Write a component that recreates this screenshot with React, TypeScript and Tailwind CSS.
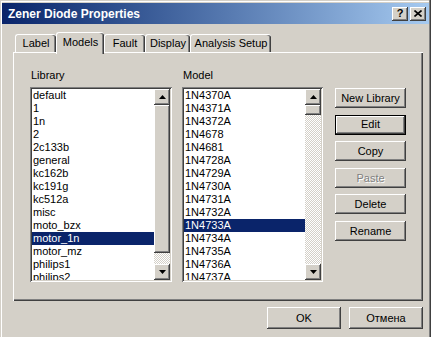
const raised =
  "shadow-[inset_-1px_-1px_#404040,inset_1px_1px_#ffffff,inset_-2px_-2px_#808080,inset_2px_2px_#d4d0c8]";
const sunken =
  "shadow-[inset_1px_1px_#808080,inset_-1px_-1px_#ffffff,inset_2px_2px_#404040,inset_-2px_-2px_#d4d0c8]";

const libraries = [
  "default",
  "1",
  "1n",
  "2",
  "2c133b",
  "general",
  "kc162b",
  "kc191g",
  "kc512a",
  "misc",
  "moto_bzx",
  "motor_1n",
  "motor_mz",
  "philips1",
  "philips2",
];

const models = [
  "1N4370A",
  "1N4371A",
  "1N4372A",
  "1N4678",
  "1N4681",
  "1N4728A",
  "1N4729A",
  "1N4730A",
  "1N4731A",
  "1N4732A",
  "1N4733A",
  "1N4734A",
  "1N4735A",
  "1N4736A",
  "1N4737A",
];

const Arrow = ({ down }: { down?: boolean }) => (
  <div className={`flex h-[16px] w-[16px] items-center justify-center bg-[#d4d0c8] ${raised}`}>
    <svg width="7" height="4" viewBox="0 0 7 4">
      <polygon points={down ? "0,0 7,0 3.5,4" : "0,4 7,4 3.5,0"} fill="#000" />
    </svg>
  </div>
);

const ScrollBar = ({ thumbClass }: { thumbClass: string }) => (
  <div className="flex w-[16px] flex-col">
    <Arrow />
    <div className={`bg-[#d4d0c8] ${raised} ${thumbClass}`} />
    <div className="flex-1 bg-[repeating-conic-gradient(#d4d0c8_0_25%,#ffffff_0_50%)] bg-[length:2px_2px]" />
    <Arrow down />
  </div>
);

interface ListBoxProps {
  items: string[];
  selected: string;
  thumbClass: string;
}

const ListBox = ({ items, selected, thumbClass }: ListBoxProps) => (
  <div className={`flex h-[195px] bg-white p-[2px] ${sunken}`}>
    <div className="flex-1 overflow-hidden">
      {items.map((item) => (
        <div
          key={item}
          className={`h-[13px] whitespace-nowrap pl-[1px] leading-[13px] ${
            item === selected ? "bg-[#0a246a] text-white" : "text-black"
          }`}
        >
          {item}
        </div>
      ))}
    </div>
    <ScrollBar thumbClass={thumbClass} />
  </div>
);

const Button = ({
  label,
  disabled,
  isDefault,
}: {
  label: string;
  disabled?: boolean;
  isDefault?: boolean;
}) => (
  <div
    className={`flex h-[20px] items-center justify-center bg-[#d4d0c8] ${
      isDefault
        ? "border border-black shadow-[inset_-1px_-1px_#404040,inset_1px_1px_#ffffff,inset_-2px_-2px_#808080]"
        : raised
    } ${disabled ? "text-[#808080] [text-shadow:1px_1px_0_#ffffff]" : "text-black"}`}
  >
    {label}
  </div>
);

const Tab = ({ label, width, active }: { label: string; width: string; active?: boolean }) => (
  <div
    className={`flex items-center justify-center rounded-t-[3px] border-l border-t border-white bg-[#d4d0c8] shadow-[inset_-1px_0_#404040,inset_-2px_0_#808080] ${width} ${
      active ? "relative z-10 h-[22px] pb-[2px]" : "mt-[2px] h-[18px]"
    }`}
  >
    {label}
  </div>
);

export default function App() {
  return (
    <div className="h-[337px] w-[434px] overflow-hidden bg-white font-['Liberation_Sans',Arial,sans-serif] text-[11px] text-black">
      <div className="flex h-[340px] w-[431px] flex-col bg-[#d4d0c8] px-[2px] pt-[3px] shadow-[inset_-1px_0_#404040,inset_-2px_0_#808080,inset_1px_1px_#d4d0c8,inset_2px_2px_#ffffff]">
        <div className="flex h-[21px] items-center bg-linear-to-r from-[#0a246a] to-[#a6caf0] pl-[6px] pr-[3px]">
          <span className="flex-1 text-[12px] font-bold text-white">Zener Diode Properties</span>
          <div className="flex gap-[2px]">
            <div className={`flex h-[14px] w-[16px] items-center justify-center bg-[#d4d0c8] text-[11px] font-bold leading-none ${raised}`}>
              ?
            </div>
            <div className={`flex h-[14px] w-[16px] items-center justify-center bg-[#d4d0c8] ${raised}`}>
              <svg width="8" height="7" viewBox="0 0 8 7">
                <path d="M0.5 0.5 L7.5 6.5 M7.5 0.5 L0.5 6.5" stroke="#000" strokeWidth="1.6" />
              </svg>
            </div>
          </div>
        </div>

        <div className="flex flex-col pl-[11px] pr-[6px]">
          <div className="mt-[8px] flex h-[20px] items-start pl-[2px]">
            <Tab label="Label" width="w-[41px]" />
            <Tab label="Models" width="w-[48px]" active />
            <Tab label="Fault" width="w-[41px]" />
            <Tab label="Display" width="w-[45px]" />
            <Tab label="Analysis Setup" width="w-[81px]" />
          </div>

          <div className="flex h-[249px] bg-[#d4d0c8] pl-[17px] pt-[17px] shadow-[inset_1px_1px_#ffffff,inset_-1px_-1px_#404040,inset_-2px_-2px_#808080]">
            <div className="flex w-[142px] flex-col">
              <div className="mb-[5px] h-[13px] pl-[1px] leading-[13px]">Library</div>
              <ListBox items={libraries} selected="motor_1n" thumbClass="h-[148px]" />
            </div>
            <div className="ml-[10px] flex w-[141px] flex-col">
              <div className="mb-[5px] h-[13px] pl-[1px] leading-[13px]">Model</div>
              <ListBox items={models} selected="1N4733A" thumbClass="h-[10px]" />
            </div>
            <div className="ml-[12px] flex w-[71px] flex-col gap-[6.6px] pt-[19px]">
              <Button label="New Library" />
              <Button label="Edit" isDefault />
              <Button label="Copy" />
              <Button label="Paste" disabled />
              <Button label="Delete" />
              <Button label="Rename" />
            </div>
          </div>

          <div className="mt-[6px] flex justify-end gap-[8px]">
            <div className={`flex h-[22px] w-[74px] items-center justify-center bg-[#d4d0c8] ${raised}`}>OK</div>
            <div className={`flex h-[22px] w-[74px] items-center justify-center bg-[#d4d0c8] ${raised}`}>Отмена</div>
          </div>
        </div>
      </div>
    </div>
  );
}
